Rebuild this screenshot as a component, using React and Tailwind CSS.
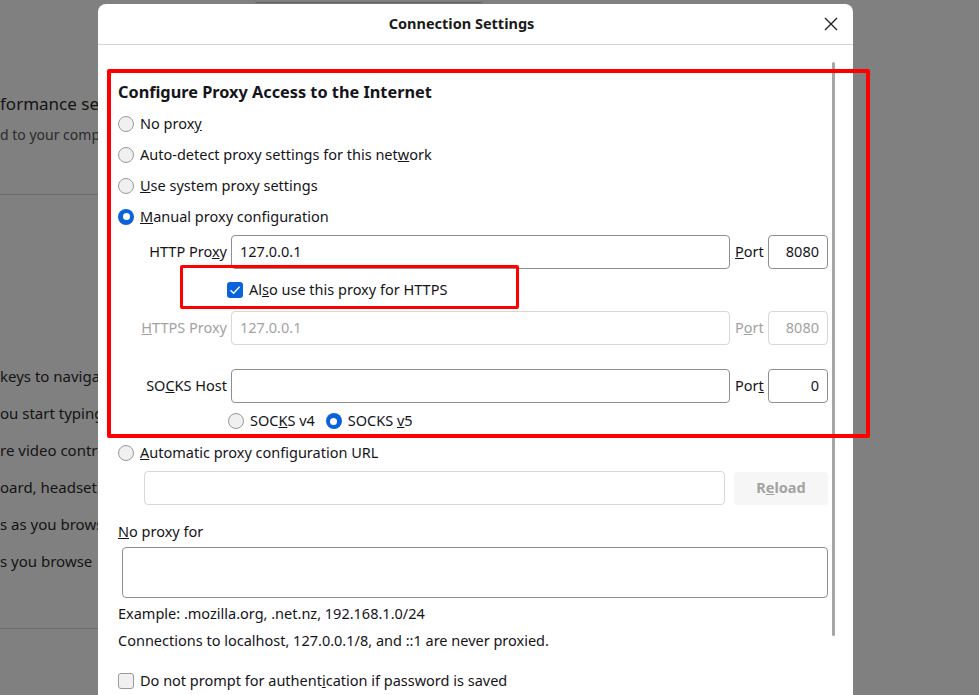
import React from "react";

const font = { fontFamily: '"Noto Sans", "Open Sans", sans-serif' };

function Radio({ checked }) {
  if (checked) {
    return (
      <span className="flex h-4 w-4 shrink-0 items-center justify-center rounded-full bg-[#0b63dc]">
        <span className="h-[7px] w-[7px] rounded-full bg-white" />
      </span>
    );
  }
  return <span className="h-4 w-4 shrink-0 rounded-full border border-[#9a9a9a] bg-[#f0f0f0]" />;
}

function Checkbox({ checked }) {
  if (checked) {
    return (
      <span className="flex h-4 w-4 shrink-0 items-center justify-center rounded-[3px] bg-[#0b63dc]">
        <svg width="12" height="12" viewBox="0 0 12 12" fill="none">
          <path d="M1.5 6.2 L4.6 9.2 L10.6 2.8" stroke="white" strokeWidth="1.3" />
        </svg>
      </span>
    );
  }
  return <span className="h-4 w-4 shrink-0 rounded-[3px] border border-[#9a9a9a] bg-[#f0f0f0]" />;
}

function ProxyRow({ label, value, port, disabled, portLabel, className }) {
  const text = disabled ? "text-[#a3a3a3]" : "text-[#15141a]";
  const border = disabled ? "border-[#d8d8d8]" : "border-[#8f8f8f]";
  return (
    <div className={"flex h-[34px] items-center " + className}>
      <div className={"w-[113px] shrink-0 pr-[4px] text-right " + text}>{label}</div>
      <div className={"flex h-[34px] flex-1 items-center rounded-[4px] border px-[8px] " + border + " " + text}>{value}</div>
      <div className={"ml-[5px] w-[29px] shrink-0 " + text}>{portLabel}</div>
      <div className={"ml-[4px] flex h-[34px] w-[60px] shrink-0 items-center justify-end rounded-[4px] border px-[8px] " + border + " " + text}>{port}</div>
    </div>
  );
}

export default function App() {
  return (
    <div className="relative h-[695px] w-[979px] overflow-hidden bg-[#808080] text-[14.5px] text-[#15141a]" style={font}>
      {/* dimmed page behind */}
      <div className="ml-[255px] h-[3px] w-[228px] rounded-b-[3px] border-b border-[#5e5e5e]" />
      <div className="mt-[89px] text-[17px] leading-[24px] text-[#141414]">formance settings</div>
      <div className="mt-[9px] text-[14px] leading-[20px] text-[#2c2c2c]">d to your computer</div>
      <div className="mt-[49px] h-px w-[120px] bg-[#6c6c6c]" />
      <div className="mt-[163px] flex flex-col text-[15px] leading-[37px] text-[#141414]">
        <span>keys to navigate</span>
        <span>ou start typing</span>
        <span>re video controls</span>
        <span>oard, headset,</span>
        <span>s as you browse</span>
        <span>s you browse</span>
      </div>
      <div className="mt-[48px] h-px w-[120px] bg-[#6c6c6c]" />

      {/* dialog */}
      <div className="absolute left-[98px] top-[4px] h-[720px] w-[755px] rounded-t-[8px] bg-white">
        <div className="relative flex h-[41px] items-center justify-center border-b border-[#d4d4d4] pr-[28px]">
          <span className="text-[14.5px] font-bold text-[#1a1a1a]">Connection Settings</span>
          <svg className="absolute right-[15px] top-[13px]" width="14" height="14" viewBox="0 0 14 14">
            <path d="M1 1 L13 13 M13 1 L1 13" stroke="#222" strokeWidth="1.4" />
          </svg>
        </div>
        <div className="absolute left-[734px] top-[58px] h-[574px] w-[3px] rounded-full bg-[#a6a6a6]" />

        <div className="pl-[20px] pr-[25px] pt-[31px]">
          <div className="h-[32px] text-[16.3px] font-bold leading-[32px]">Configure Proxy Access to the Internet</div>
          <div className="flex h-[31px] items-center gap-[6px]">
            <Radio />
            <span>
              No prox<u>y</u>
            </span>
          </div>
          <div className="flex h-[31px] items-center gap-[6px]">
            <Radio />
            <span>
              Auto-detect proxy settings for this net<u>w</u>ork
            </span>
          </div>
          <div className="flex h-[31px] items-center gap-[6px]">
            <Radio />
            <span>
              <u>U</u>se system proxy settings
            </span>
          </div>
          <div className="flex h-[31px] items-center gap-[6px]">
            <Radio checked />
            <span>
              <u>M</u>anual proxy configuration
            </span>
          </div>

          <ProxyRow
            className="mt-[3px]"
            label={<>HTTP Pro<u>x</u>y</>}
            value="127.0.0.1"
            portLabel={<><u>P</u>ort</>}
            port="8080"
          />
          <div className="mt-[4px] flex h-[34px] items-center gap-[6px] pl-[109px]">
            <Checkbox checked />
            <span>
              Al<u>s</u>o use this proxy for HTTPS
            </span>
          </div>
          <ProxyRow
            className="mt-[4px]"
            disabled
            label={<><u>H</u>TTPS Proxy</>}
            value="127.0.0.1"
            portLabel={<>P<u>o</u>rt</>}
            port="8080"
          />
          <ProxyRow
            className="mt-[24px]"
            label={<>SO<u>C</u>KS Host</>}
            value=""
            portLabel={<>Por<u>t</u></>}
            port="0"
          />
          <div className="mt-[5px] flex h-[26px] items-center pl-[110px]">
            <Radio />
            <span className="ml-[6px]">
              SOC<u>K</u>S v4
            </span>
            <span className="ml-[11px]" />
            <Radio checked />
            <span className="ml-[6px]">
              SOCKS <u>v</u>5
            </span>
          </div>

          <div className="mt-[3px] flex h-[31px] items-center gap-[6px]">
            <Radio />
            <span>
              <u>A</u>utomatic proxy configuration URL
            </span>
          </div>
          <div className="mt-[3px] flex h-[34px] items-center pl-[26px]">
            <div className="h-[34px] flex-1 rounded-[4px] border border-[#d8d8d8]" />
            <div className="ml-[9px] flex h-[33px] w-[94px] items-center justify-center rounded-[4px] bg-[#f6f6f6] font-bold text-[#a3a3a3]">
              R<u>e</u>load
            </div>
          </div>

          <div className="mt-[14px] flex h-[26px] items-center">
            <span>
              <u>N</u>o proxy for
            </span>
          </div>
          <div className="ml-[4px] mt-[2px] h-[51px] rounded-[4px] border border-[#8f8f8f]" />
          <div className="mt-[3px] flex h-[26px] items-center">Example: .mozilla.org, .net.nz, 192.168.1.0/24</div>
          <div className="mt-[1px] flex h-[26px] items-center">Connections to localhost, 127.0.0.1/8, and ::1 are never proxied.</div>
          <div className="mt-[14px] flex h-[26px] items-center gap-[6px]">
            <Checkbox />
            <span>
              Do not prompt for authent<u>i</u>cation if password is saved
            </span>
          </div>
        </div>
      </div>

      {/* annotation boxes */}
      <div className="absolute left-[107px] top-[69px] h-[369px] w-[763px] rounded-[2px] border-[4px] border-[#ff0000]" />
      <div className="absolute left-[180px] top-[265px] h-[44px] w-[339px] rounded-[2px] border-[3.5px] border-[#ff0000]" />
    </div>
  );
}
